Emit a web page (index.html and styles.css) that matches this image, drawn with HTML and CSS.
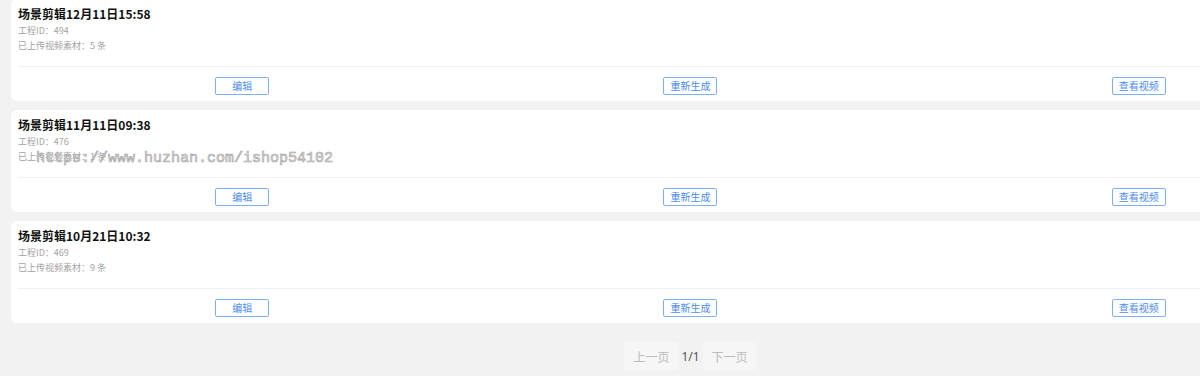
FILE: index.html
```html
<!DOCTYPE html>
<html lang="zh">
<head>
<meta charset="utf-8">
<title>场景剪辑</title>
<link rel="stylesheet" href="styles.css">
</head>
<body>
<div class="page">
  <div class="list">
    <div class="card">
      <div class="info">
        <div class="title">场景剪辑12月11日15:58</div>
        <div class="meta">工程ID：494</div>
        <div class="meta">已上传视频素材：5 条</div>
      </div>
      <div class="actions">
        <div class="cell"><button class="btn">编辑</button></div>
        <div class="cell"><button class="btn">重新生成</button></div>
        <div class="cell"><button class="btn">查看视频</button></div>
      </div>
    </div>
    <div class="card">
      <div class="info">
        <div class="title">场景剪辑11月11日09:38</div>
        <div class="meta">工程ID：476</div>
        <div class="meta">已上传视频素材：1 条</div>
      </div>
      <div class="actions">
        <div class="cell"><button class="btn">编辑</button></div>
        <div class="cell"><button class="btn">重新生成</button></div>
        <div class="cell"><button class="btn">查看视频</button></div>
      </div>
      <div class="watermark">https://www.huzhan.com/ishop54102</div>
    </div>
    <div class="card">
      <div class="info">
        <div class="title">场景剪辑10月21日10:32</div>
        <div class="meta">工程ID：469</div>
        <div class="meta">已上传视频素材：9 条</div>
      </div>
      <div class="actions">
        <div class="cell"><button class="btn">编辑</button></div>
        <div class="cell"><button class="btn">重新生成</button></div>
        <div class="cell"><button class="btn">查看视频</button></div>
      </div>
    </div>
  </div>
  <div class="pager">
    <button class="pg-btn">上一页</button>
    <span class="pg-num">1/1</span>
    <button class="pg-btn">下一页</button>
  </div>
</div>
</body>
</html>
```

FILE: styles.css
```css
* { box-sizing: border-box; }
html, body {
  margin: 0;
  padding: 0;
  background: #f2f2f2;
  overflow: hidden;
}
body {
  font-family: "Noto Sans CJK SC", "Noto Sans", sans-serif;
  color: #111;
}
.page {
  width: 1381px;
  padding: 0 11px;
}
.list {
  margin-top: -1px;
  display: flex;
  flex-direction: column;
  gap: 9px;
}
.card {
  position: relative;
  background: #fff;
  border-radius: 6px;
  padding: 0 7px;
  height: 102px;
}
.info {
  padding: 6px 0 13px;
  border-bottom: 1px solid #f1f1f1;
}
.title {
  font-size: 12px;
  font-weight: 700;
  line-height: 18px;
  color: #111;
}
.meta {
  font-size: 9px;
  line-height: 15px;
  color: #a3a3a3;
}
.actions {
  display: grid;
  grid-template-columns: repeat(3, 1fr);
  padding: 10px 0 5px;
}
.cell {
  display: flex;
  justify-content: center;
}
.btn {
  width: 54px;
  height: 18px;
  padding: 0;
  margin: 0;
  background: #fff;
  border: 1px solid #7fb0f5;
  border-radius: 2px;
  color: #4b8cf0;
  font-family: "Noto Sans CJK SC", sans-serif;
  font-size: 10px;
  line-height: 16px;
}
.watermark {
  position: absolute;
  left: 25px;
  top: 40px;
  font-family: "Liberation Mono", "DejaVu Sans Mono", monospace;
  font-size: 15px;
  color: #e6e6e6;
  -webkit-text-stroke: 0.6px #a0a0a0;
  white-space: nowrap;
}
.pager {
  display: flex;
  justify-content: center;
  align-items: center;
  gap: 3px;
  padding-top: 19px;
}
.pg-btn {
  width: 54px;
  height: 28px;
  padding: 0;
  margin: 0;
  border: none;
  border-radius: 4px;
  background: #f6f6f6;
  color: #bcbcbc;
  font-family: "Noto Sans CJK SC", sans-serif;
  font-size: 12px;
}
.pg-num {
  font-size: 12px;
  color: #555;
  font-family: "Noto Sans", "Noto Sans CJK SC", sans-serif;
}
```
